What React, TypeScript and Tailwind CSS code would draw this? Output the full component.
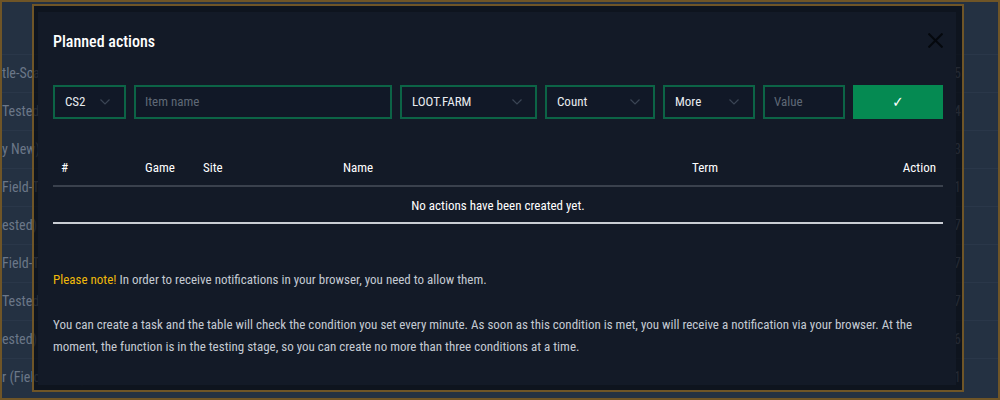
import React from "react";

const FONT = "font-['Roboto_Condensed','Open_Sans','DejaVu_Sans_Condensed',sans-serif] [font-stretch:75%]";

function Chevron() {
  return (
    <svg width="10" height="6" viewBox="0 0 10 6" className="shrink-0">
      <polyline points="0.5,0.5 5,5 9.5,0.5" fill="none" stroke="#3b4555" strokeWidth="1.2" />
    </svg>
  );
}

function Select({ label, w, chevronPr }: { label: string; w: string; chevronPr: string }) {
  return (
    <div className={`${w} h-[34px] border-2 border-[#0c6446] bg-[#111827] flex items-center pl-[10px] ${chevronPr} justify-between shrink-0`}>
      <span className="text-[13px] text-[#e8ebef]">{label}</span>
      <Chevron />
    </div>
  );
}

function Input({ placeholder, w }: { placeholder: string; w: string }) {
  return (
    <div className={`${w} h-[34px] border-2 border-[#0c6446] bg-[#111827] flex items-center pl-[9px] shrink-0`}>
      <span className="text-[13px] text-[#5f6876]">{placeholder}</span>
    </div>
  );
}

const leftTexts = ["tle-Scarred)", "Tested)", "y New)", "Field-Tested)", "ested)", "Field-Tested)", "Tested)", "ested)", "r (Field-Tested)"];
const rightNums = ["5", "4", "3", "1", "7", "7", "7", "6", "1"];

export default function App() {
  return (
    <div className={`relative w-[1000px] h-[400px] overflow-hidden bg-[#243142] border-2 border-[#6f5527] ${FONT}`}>
      {/* background page */}
      <div className="flex flex-col pt-[52px]">
        {leftTexts.map((t, i) => (
          <div key={i} className="h-[38px] flex items-center justify-between border-t border-[#2a3749] pr-[37px]">
            <span className="text-[14px] text-[#6b7788] whitespace-nowrap">{t}</span>
            <span className="text-[14px] text-[#6b7788]">{rightNums[i]}</span>
          </div>
        ))}
      </div>

      {/* modal */}
      <div className="absolute left-[30px] top-[2px] w-[932px] h-[388px] border-2 border-[#6f5527] bg-[rgba(6,9,15,0.7)] pl-[4px] pt-[6px] pr-[7px] pb-[5px] flex">
        <div className="relative flex-1 bg-[#131a27] pl-[15px] pr-[13px] pt-[18px] flex flex-col">
          <div className="text-[16px] leading-[24px] font-medium text-white">Planned actions</div>
          <svg className="absolute right-[13px] top-[21px]" width="15" height="15" viewBox="0 0 15 15">
            <line x1="0.5" y1="0.5" x2="14.5" y2="14.5" stroke="#05080d" strokeWidth="2" />
            <line x1="14.5" y1="0.5" x2="0.5" y2="14.5" stroke="#05080d" strokeWidth="2" />
          </svg>

          <div className="mt-[31px] flex items-center gap-[8px]">
            <Select label="CS2" w="w-[73px]" chevronPr="pr-[14px]" />
            <Input placeholder="Item name" w="w-[258px]" />
            <Select label="LOOT.FARM" w="w-[137px]" chevronPr="pr-[13px]" />
            <Select label="Count" w="w-[110px]" chevronPr="pr-[13px]" />
            <Select label="More" w="w-[92px]" chevronPr="pr-[14px]" />
            <Input placeholder="Value" w="w-[82px]" />
            <div className="w-[90px] h-[34px] bg-[#058a52] flex items-center justify-center shrink-0">
              <span className="text-[15px] text-white font-['DejaVu_Sans',sans-serif]">✓</span>
            </div>
          </div>

          <div className="mt-[32px] h-[36px] flex items-center border-b-2 border-[#3a414d] text-[13px] text-white">
            <div className="w-[92px] pl-[8px]">#</div>
            <div className="w-[58px]">Game</div>
            <div className="w-[140px]">Site</div>
            <div className="w-[349px]">Name</div>
            <div className="flex-1">Term</div>
            <div className="pr-[7px]">Action</div>
          </div>
          <div className="pt-[9px] pb-[6px] text-center text-[13px] leading-[20px] text-white border-b-2 border-[#c9cdd3]">
            No actions have been created yet.
          </div>

          <p className="mt-[45px] text-[13px] leading-[22px] text-[#c4cad3]">
            <span className="text-[#f0b90b]">Please note!</span> In order to receive notifications in your browser, you need to allow them.
          </p>
          <p className="mt-[23px] text-[13px] leading-[22px] text-[#c4cad3]">
            You can create a task and the table will check the condition you set every minute. As soon as this condition is met, you will receive a notification via your browser. At the moment, the function is in the testing stage, so you can create no more than three conditions at a time.
          </p>
        </div>
      </div>
    </div>
  );
}
